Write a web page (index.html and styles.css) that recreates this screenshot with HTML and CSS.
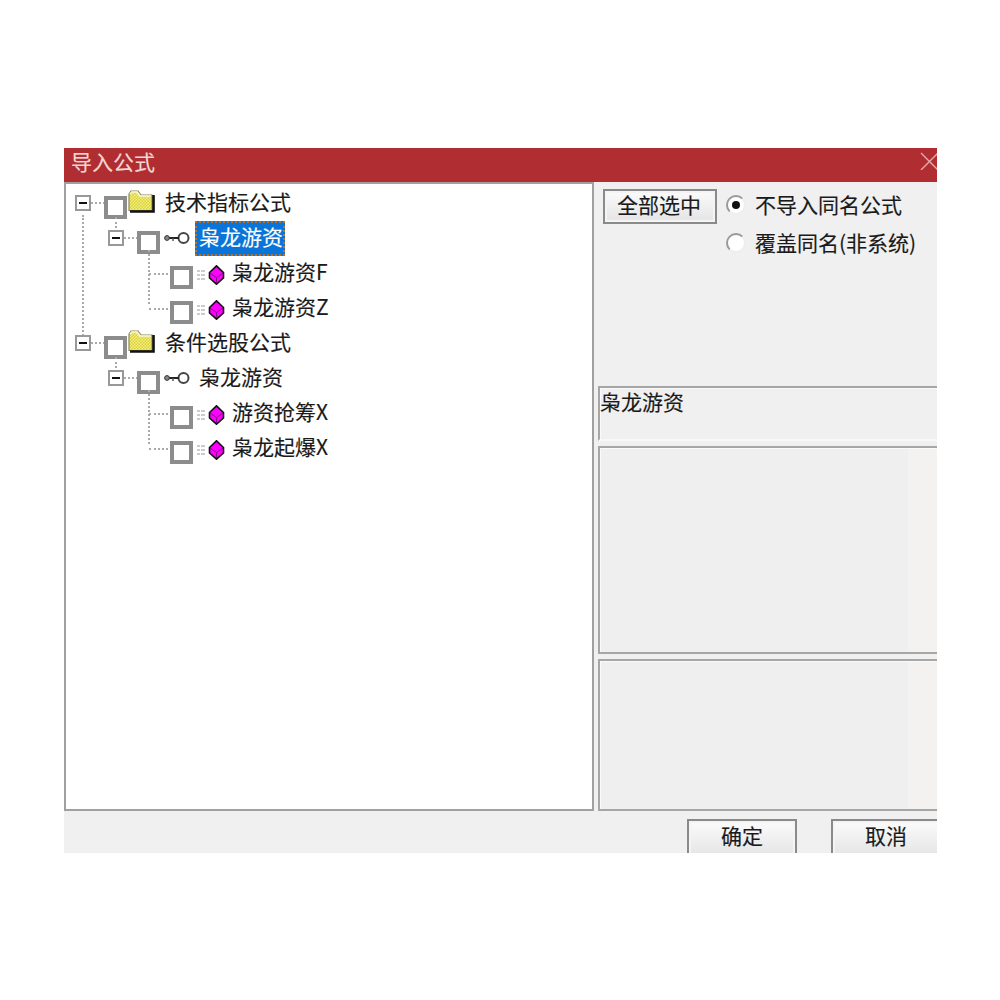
FILE: index.html

```html
<!doctype html>
<html lang="zh-CN">
<head>
 <meta charset="utf-8" />
 <title>导入公式</title>
 <link rel="stylesheet" href="styles.css">
</head>
<body>
 <svg class="defs" width="0" height="0" aria-hidden="true">
 <defs>
 <pattern id="dither" width="3" height="3" patternUnits="userSpaceOnUse">
 <rect width="3" height="3" fill="#f6f07a"/>
 <rect width="1.5" height="1.5" fill="#d8d040"/>
 <rect x="1.5" y="1.5" width="1.5" height="1.5" fill="#d8d040"/>
 </pattern>
 <symbol id="folder" viewBox="0 0 27 23">
 <path d="M1 20.500V4l2-3h7l3 4h11v15.500z" fill="url(#dither)" stroke="#8c8a5a" stroke-width="1.200"/>
 <path d="M2 4l2-2h5l3 4h11" fill="none" stroke="#f9f7dc" stroke-width="1.600"/>
 <path d="M25.500 5v16.500H2" fill="none" stroke="#111" stroke-width="2.600"/>
 </symbol>
 <symbol id="key" viewBox="0 0 26 14">
 <circle cx="19.500" cy="7" r="5" fill="#fff" stroke="#444" stroke-width="2"/>
 <path d="M4 7h11" stroke="#222" stroke-width="2"/>
 <path d="M9 7v3" stroke="#555" stroke-width="1.500"/>
 <circle cx="3" cy="7" r="2.400" fill="#888" stroke="#333"/>
 </symbol>
 <symbol id="cube" viewBox="0 0 28 20">
 <path d="M0 6h3m1 0h4M0 10h3m1 0h4M0 14h3m1 0h4" stroke="#999" stroke-width="1.200"/>
 <path d="M19.500.8l7 6.700v5.500l-7 6.200-7-6.200V7.500z" fill="#f0f" stroke="#111" stroke-width="1.600"/>
 <path d="M13 8l6.500 4.500L26 8M19.500 12.500V18" fill="none" stroke="#80107f" stroke-width="1"/>
 </symbol>
 </defs>
 </svg>

 <div class="dialog">
 <div class="titlebar">
 <span class="title">导入公式</span>
 <svg class="close" viewBox="0 0 18 18"><path d="M2 1l17 17M19 1L2 18" stroke="#e8a9a9" stroke-width="1.400"/></svg>
 </div>

 <div class="main">
 <div class="tree">
 <div class="row lv1 first">
 <span class="exp"></span><span class="check"></span>
 <svg class="ic-folder"><use href="#folder"/></svg>
 <span class="label">技术指标公式</span>
 </div>
 <div class="row lv2">
 <span class="exp"></span><span class="check"></span>
 <svg class="ic-key"><use href="#key"/></svg>
 <span class="label selected">枭龙游资</span>
 </div>
 <div class="row lv3 tall">
 <span class="check"></span>
 <svg class="ic-cube"><use href="#cube"/></svg>
 <span class="label">枭龙游资F</span>
 </div>
 <div class="row lv3">
 <span class="check"></span>
 <svg class="ic-cube"><use href="#cube"/></svg>
 <span class="label">枭龙游资Z</span>
 </div>
 <div class="row lv1">
 <span class="exp"></span><span class="check"></span>
 <svg class="ic-folder"><use href="#folder"/></svg>
 <span class="label">条件选股公式</span>
 </div>
 <div class="row lv2">
 <span class="exp"></span><span class="check"></span>
 <svg class="ic-key"><use href="#key"/></svg>
 <span class="label plain">枭龙游资</span>
 </div>
 <div class="row lv3 tall">
 <span class="check"></span>
 <svg class="ic-cube"><use href="#cube"/></svg>
 <span class="label">游资抢筹X</span>
 </div>
 <div class="row lv3">
 <span class="check"></span>
 <svg class="ic-cube"><use href="#cube"/></svg>
 <span class="label">枭龙起爆X</span>
 </div>
 </div>

 <div class="side">
 <div class="options">
 <button class="btn selectall">全部选中</button>
 <div class="radios">
 <div class="radio-row"><span class="radio on"></span><span class="radio-text">不导入同名公式</span></div>
 <div class="radio-row"><span class="radio"></span><span class="radio-text">覆盖同名(非系统)</span></div>
 </div>
 </div>
 <div class="box name">枭龙游资</div>
 <div class="box desc"></div>
 <div class="box params"></div>
 </div>
 </div>

 <div class="footer">
 <button class="btn">确定</button>
 <button class="btn cancel">取消</button>
 </div>
 </div>
</body>
</html>
```

FILE: styles.css

```css
*{box-sizing:border-box}
html,body{height:100%}
body{
margin:0;
padding:148px 0 0 64px;
background:#fff;
color:#1a1a1a;
font-family:"Noto Sans CJK SC","Liberation Sans",sans-serif;
font-size:21px;
-webkit-text-stroke:.15px currentColor;
overflow:hidden;
}
.defs{position:absolute}
.dialog{width:873px; height:705px; background:#f0f0f0; display:flex; flex-direction:column}
.titlebar{
height:34px; flex:none;
background:#b02e32;
display:flex; align-items:flex-start; justify-content:space-between;
padding-left:7px;
}
.title{color:#f3d6d4; line-height:26px}
.close{width:18px; height:18px; flex:none; margin-top:4px}
.main{display:flex; height:629px; flex:none}

/* tree */
.tree{
width:530px; flex:none;
background:#fff;
border:2px solid #a0a0a0;
padding-top:2px;
}
.row{height:35px; display:flex; align-items:center; position:relative}
.lv1{padding-left:9px}
.lv2{padding-left:42px}
.lv3{padding-left:104px}
.exp{
width:16px; height:16px; flex:none;
border:2px solid #999;
background:#fff;
position:relative;
margin-right:13px;
margin-top:-2px;
}
.exp::before{content:""; position:absolute; left:2px; right:2px; top:5px; height:2px; background:#111}
.exp::after{
content:""; position:absolute; left:14px; top:5px; width:14px;
border-top:2px dotted #aaa;
}
.check{
width:23px; height:23px; flex:none;
border:4px solid #8c8c8c;
background:#fff;
margin-top:8px;
position:relative;
}
.ic-folder{width:27px; height:23px; flex:none; margin:-5px 0 0 1px}
.ic-key{width:26px; height:14px; flex:none; margin:-2px 0 0 4px}
.ic-cube{width:28px; height:20px; flex:none; margin:3px 0 0 4px}
.label{line-height:30px; white-space:nowrap; margin-top:-6px}
.lv1 .label{margin-left:10px}
.lv2 .label{margin-left:5px; padding:0 2px 5px 4px; margin-top:-1px}
.lv3 .label{margin-left:7px}
.selected{
background:#0a74d8;
color:#fff;
outline:2px dotted #c0701c;
outline-offset:-2px;
}
/* dotted connectors */
.lv1.first::before{
content:""; position:absolute; left:16px; top:29px; height:128px;
border-left:2px dotted #aaa;
}
.lv1 + .lv2 .check::before{
content:""; position:absolute; left:-26px; top:-18px; height:11px;
border-left:2px dotted #aaa;
}
.lv2::after{
content:""; position:absolute; left:82px; top:29px; height:54px;
border-left:2px dotted #aaa;
}
.lv3::before{
content:""; position:absolute; left:83px; top:17px; width:19px;
border-top:2px dotted #aaa;
}

/* right side */
.side{flex:1; padding-left:4px; min-width:0; display:flex; flex-direction:column}
.options{height:204px; flex:none; display:flex; padding:7px 0 0 5px}
.btn{
font:inherit; line-height:24px; color:#1a1a1a;
-webkit-text-stroke:.15px currentColor;
width:110px; height:40px; flex:none;
border:2px solid #8a8a8a;
background:linear-gradient(180deg,#fbfbfb,#e4e4e4);
box-shadow:inset 0 0 0 2px #f4f4f4;
padding:0 0 8px;
}
.selectall{width:114px; height:35px; flex:none; padding:0 2px 6px 0}
.radios{margin-left:9px; display:flex; flex-direction:column; gap:8px}
.radio-row{height:30px; display:flex; align-items:center; gap:9px}
.radio-text{line-height:28px; margin-top:-1px}
.radio{
width:20px; height:20px; flex:none; border-radius:50%;
background:#fff;
border:2px solid #999;
border-right-color:#eee; border-bottom-color:#eee;
position:relative;
margin-top:2px;
}
.radio.on::after{content:""; position:absolute; left:4px; top:4px; width:8px; height:8px; border-radius:50%; background:#111}
.box{
border:2px solid #a6a6a6;
border-right:0;
flex:none;
box-shadow:inset 1px 1px 0 #fafafa;
}
.name{height:55px; border-bottom-color:#f8f8f8; line-height:26px; padding-left:0; margin-bottom:5px}
.desc{height:208px; margin-bottom:5px; background:linear-gradient(90deg,#efefef 308px,#f3f2f0 308px)}
.params{height:152px; background:linear-gradient(90deg,#efefef 308px,#f3f2f0 308px)}

/* buttons run past the bottom and right edge of the window in the capture */
.footer{height:42px; flex:none; overflow:hidden; display:flex; justify-content:flex-end; gap:34px; padding-top:8px}
.cancel{margin-right:-4px}
```
